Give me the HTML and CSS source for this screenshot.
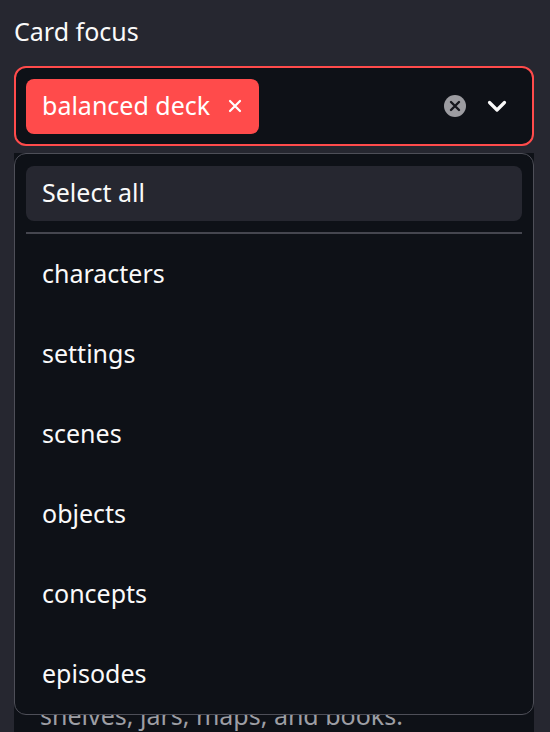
FILE: index.html
```html
<!DOCTYPE html>
<html lang="en">
<head>
    <meta charset="UTF-8">
    <meta name="viewport" content="width=device-width, initial-scale=1.0">
    <title>Card focus</title>
    <link rel="stylesheet" href="styles.css">
</head>
<body>
    <div class="panel">
        <label class="field-label">Card focus</label>

        <div class="multiselect">
            <span class="tag">balanced deck
                <svg class="tag-remove" width="14" height="14" viewBox="0 0 14 14">
                    <path d="M2 2 L12 12 M12 2 L2 12" stroke="#fff" stroke-width="2.2" stroke-linecap="round"/>
                </svg>
            </span>
            <div class="controls">
                <svg class="clear-icon" width="24" height="24" viewBox="0 0 24 24">
                    <circle cx="12" cy="12" r="11" fill="#9c9ca1"/>
                    <path d="M8 8 L16 16 M16 8 L8 16" stroke="#16171d" stroke-width="2.4" stroke-linecap="round"/>
                </svg>
                <svg class="chevron" width="22" height="22" viewBox="0 0 22 22">
                    <path d="M3.5 7.5 L11 15 L18.5 7.5" fill="none" stroke="#fafafa" stroke-width="3.2" stroke-linecap="round" stroke-linejoin="round"/>
                </svg>
            </div>
        </div>

        <div class="caption-box">
            <p>shelves, jars, maps, and books.</p>
        </div>

        <!-- open dropdown -->
        <div class="dropdown">
            <div class="option select-all">Select all</div>
            <div class="divider"></div>
            <div class="option">characters</div>
            <div class="option">settings</div>
            <div class="option">scenes</div>
            <div class="option">objects</div>
            <div class="option">concepts</div>
            <div class="option">episodes</div>
        </div>
    </div>
</body>
</html>
```

FILE: styles.css
```css
/* Page */
body {
    margin: 0;
    background: #262730;
    color: #fafafa;
    font-family: "Noto Sans", "Open Sans", sans-serif;
    overflow: hidden;
}

.panel {
    position: relative;
    width: 520px;
    padding: 13px 16px 0 14px;
}

.field-label {
    display: block;
    font-size: 25px;
    line-height: 36px;
    margin-bottom: 17px;
}

/* Selected values box */
.multiselect {
    display: flex;
    align-items: center;
    justify-content: space-between;
    height: 80px;
    box-sizing: border-box;
    padding: 0 24px 0 10px;
    background: #0e1117;
    border: 2px solid #ff4b4b;
    border-radius: 12px;
}

.tag {
    display: inline-flex;
    align-items: center;
    height: 55px;
    box-sizing: border-box;
    padding: 0 17px 3px 16px;
    background: #ff4b4b;
    border-radius: 8px;
    font-size: 25px;
    color: #fff;
}

.tag-remove {
    margin: 3px 0 0 18px;
}

.controls {
    display: flex;
    align-items: center;
    gap: 19px;
}

.caption-box {
    margin-top: 7px;
    height: 579px;
    box-sizing: border-box;
    padding: 546px 0 0 26px;
    background: #0e1117;
}

.caption-box p {
    margin: 0;
    font-size: 25px;
    line-height: 33px;
    color: #9d9ea4;
    white-space: nowrap;
}

/* Open options list, drawn over the page */
.dropdown {
    position: absolute;
    top: 153px;
    left: 14px;
    width: 520px;
    height: 562px;
    box-sizing: border-box;
    padding: 12px 11px 0 11px;
    background: #0e1117;
    border: 1.5px solid #4e4f58;
    border-radius: 12px;
}

.option {
    height: 80px;
    box-sizing: border-box;
    display: flex;
    align-items: center;
    padding: 0 0 3px 16px;
    font-size: 25px;
}

.select-all {
    height: 55px;
    background: #262730;
    border-radius: 8px;
}

.divider {
    height: 2px;
    margin-top: 11px;
    background: #45464f;
}
```
